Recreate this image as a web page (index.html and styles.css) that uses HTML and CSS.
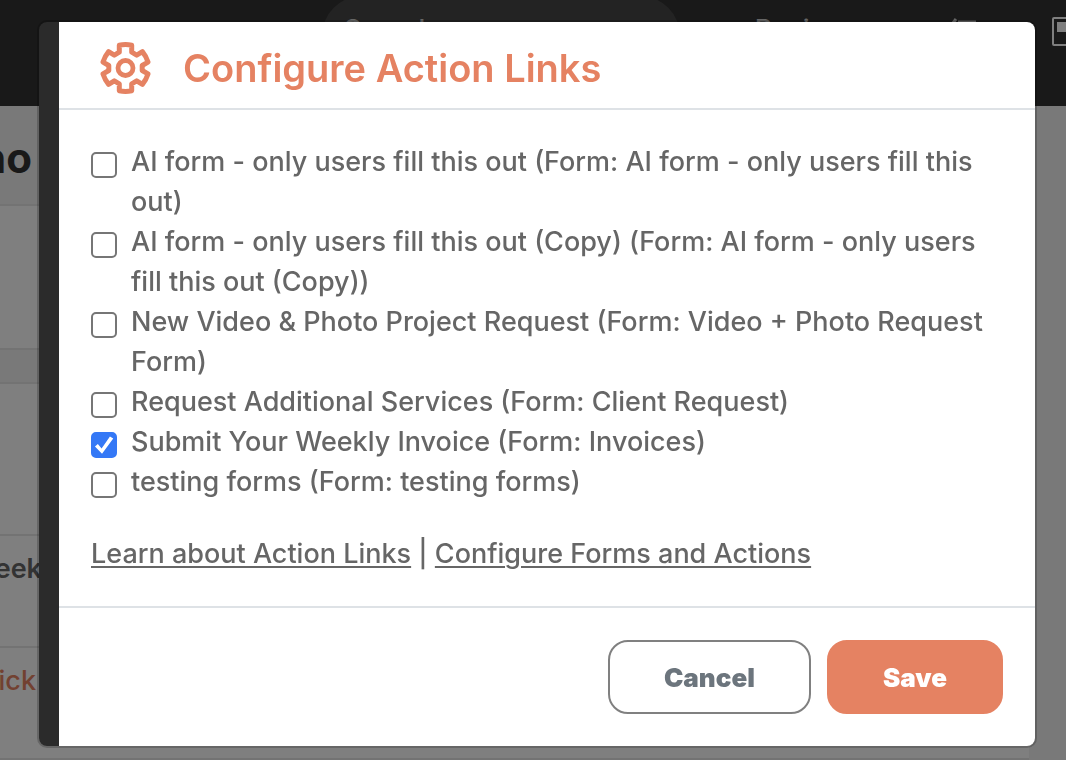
FILE: index.html
```html
<!DOCTYPE html>
<html lang="en">
  <head>
    <meta charset="UTF-8" />
    <meta name="viewport" content="width=device-width, initial-scale=1.0" />
    <title>Configure Action Links</title>
    <link rel="stylesheet" href="styles.css" />
  </head>
  <body>
    <div class="page" inert>
      <header class="topbar">
        <div class="search">Search</div>
        <nav class="nav">
          <span>Reviews</span>
          <svg class="nav-tasks" width="32" height="32" viewBox="0 0 32 32" fill="none" stroke="#ccc" stroke-width="3">
            <path d="M1 6l3 3 6-8M12 4h18M1 17l3 3 6-8M12 17h18M12 28h18" />
          </svg>
          <svg class="nav-window" width="30" height="30" viewBox="0 0 30 30">
            <rect x="1" y="1" width="28" height="27" rx="1" fill="none" stroke="#fff" stroke-width="2" />
            <path d="M5 5h20v10H5z" fill="#fff" />
          </svg>
        </nav>
      </header>
      <main class="content">
        <h2 class="page-title">no</h2>
        <div class="panel panel-short"></div>
        <div class="panel-gap"></div>
        <div class="panel panel-tall"></div>
        <div class="row row-label"><span>eek</span></div>
        <div class="row row-link"><span>ick</span></div>
        <div class="row"></div>
      </main>
    </div>

    <div class="overlay">
      <form class="modal" role="dialog" aria-labelledby="modalTitle">
        <div class="modal-header">
          <svg class="gear" width="52" height="52" viewBox="0 0 52 52" fill="none" stroke="#e58262" aria-hidden="true">
            <path
              stroke-width="5"
              stroke-linejoin="round"
              d="M20.3 3.3Q26.5 1.8 32.7 3.3V10.2L37.7 13.2L43.4 9.7Q47.1 14.2 49 20.1L43.2 23.5V28.5L49 31.9Q47.1 37.8 43.4 42.3L37.7 38.8L32.7 41.8V48.7Q26.5 50.2 20.3 48.7V41.8L15.3 38.8L9.6 42.3Q5.9 37.8 4 31.9L9.8 28.5V23.5L4 20.1Q5.9 14.2 9.6 9.7L15.3 13.2L20.3 10.2Z"
            />
            <circle cx="26.5" cy="26" r="7.5" stroke-width="4.8" />
          </svg>
          <h1 class="modal-title" id="modalTitle">Configure Action Links</h1>
        </div>

        <div class="modal-body">
          <ul class="options">
            <li>
              <label class="option">
                <input type="checkbox" />
                <span>AI form - only users fill this out (Form: AI form - only users fill this out)</span>
              </label>
            </li>
            <li>
              <label class="option">
                <input type="checkbox" />
                <span>AI form - only users fill this out (Copy) (Form: AI form - only users fill this out (Copy))</span>
              </label>
            </li>
            <li>
              <label class="option">
                <input type="checkbox" />
                <span>New Video &amp; Photo Project Request (Form: Video + Photo Request Form)</span>
              </label>
            </li>
            <li>
              <label class="option">
                <input type="checkbox" />
                <span>Request Additional Services (Form: Client Request)</span>
              </label>
            </li>
            <li>
              <label class="option">
                <input type="checkbox" checked />
                <span>Submit Your Weekly Invoice (Form: Invoices)</span>
              </label>
            </li>
            <li>
              <label class="option">
                <input type="checkbox" />
                <span>testing forms (Form: testing forms)</span>
              </label>
            </li>
          </ul>
          <p class="help">
            <a href="#">Learn about Action Links</a> | <a href="#">Configure Forms and Actions</a>
          </p>
        </div>

        <div class="modal-footer">
          <button type="button" class="btn btn-cancel">Cancel</button>
          <button type="button" class="btn btn-save">Save</button>
        </div>
      </form>
    </div>
  </body>
</html>
```
FILE: styles.css
```css
* {
  box-sizing: border-box;
}

body {
  margin: 0;
  font-family: Inter, "Liberation Sans", sans-serif;
  font-size: 27px;
  font-weight: 500;
  line-height: 40px;
  color: #666;
  background: #f2f2f2;
  overflow: hidden;
}

/* Page behind the modal */
.page {
  height: 100vh;
  overflow: hidden;
}

.topbar {
  display: flex;
  justify-content: space-between;
  height: 106px;
  padding-left: 322px;
  background: #323232;
  color: #ccc;
  overflow: hidden;
}

.search {
  width: 358px;
  height: 80px;
  margin-top: -4px;
  padding: 14px 22px;
  border-radius: 40px;
  background: #474747;
}

.nav {
  display: flex;
  flex: none;
  align-items: flex-start;
  margin-right: -16px;
  padding-top: 10px;
}

.nav-tasks {
  margin: 8px 74px 0 84px;
}

.nav-window {
  margin-top: 7px;
}

.content {
  margin-right: 37px;
}

.page-title {
  display: flex;
  justify-content: flex-end;
  width: 32px;
  height: 98px;
  margin: 0;
  font-size: 42px;
  line-height: 104px;
  color: #323232;
}

.panel,
.row {
  background: #fff;
  border-top: 2px solid #e6e6e6;
}

.panel-short {
  height: 144px;
}

.panel-gap {
  height: 34px;
  border-top: 2px solid #e6e6e6;
}

.panel-tall {
  height: 152px;
}

.row {
  height: 112px;
  padding-top: 13px;
}

.row span {
  display: flex;
  justify-content: flex-end;
  width: 36px;
}

.row-label {
  font-weight: 600;
}

.row-label span {
  width: 42px;
}

.row-link {
  color: #e58262;
}

/* Modal */
.overlay {
  position: fixed;
  inset: 0;
  padding: 20px 29px 0 37px;
  background: rgba(0, 0, 0, 0.5);
}

.modal {
  background: linear-gradient(to right, #2b2b2b 20px, #fff 20px) padding-box;
  border: 2px solid rgba(0, 0, 0, 0.2);
  border-radius: 10px;
  padding-left: 20px;
}

.modal-header {
  display: flex;
  align-items: center;
  gap: 32px;
  height: 88px;
  padding: 6px 40px 0;
  border-bottom: 2px solid #dee2e6;
}

.gear {
  flex: none;
}

.modal-title {
  margin: 0;
  font-size: 38px;
  font-weight: 600;
  line-height: 50px;
  color: #e58262;
}

.modal-body {
  padding: 32px;
}

.options {
  margin: 0;
  padding: 0;
  list-style: none;
}

.option {
  display: flex;
  align-items: flex-start;
  gap: 14px;
}

.option input {
  flex: none;
  appearance: none;
  width: 26px;
  height: 26px;
  margin: 10px 0 0;
  border: 2px solid #767676;
  border-radius: 5px;
  background: #fff;
}

.option input:checked {
  border-color: #3478f6;
  background: #3478f6;
}

.option input:checked::before {
  content: "";
  display: block;
  width: 22px;
  height: 22px;
  background: #fff;
  clip-path: polygon(9% 57%, 22% 46%, 39% 66%, 77% 11%, 92% 21%, 41% 90%);
}

.help {
  margin: 32px 0 0;
}

.help a {
  color: inherit;
  text-decoration-thickness: 2px;
  text-underline-offset: 3px;
}

.modal-footer {
  display: flex;
  justify-content: flex-end;
  gap: 16px;
  padding: 32px;
  border-top: 2px solid #dee2e6;
}

.btn {
  height: 74px;
  padding: 0 54px;
  border: 2px solid #e58262;
  border-radius: 20px;
  font-family: inherit;
  font-size: 26px;
  font-weight: 900;
}

.btn-cancel {
  border-color: #808080;
  background: #fff;
  color: #6c757d;
}

.btn-save {
  background: #e58262;
  color: #fff;
}
```
